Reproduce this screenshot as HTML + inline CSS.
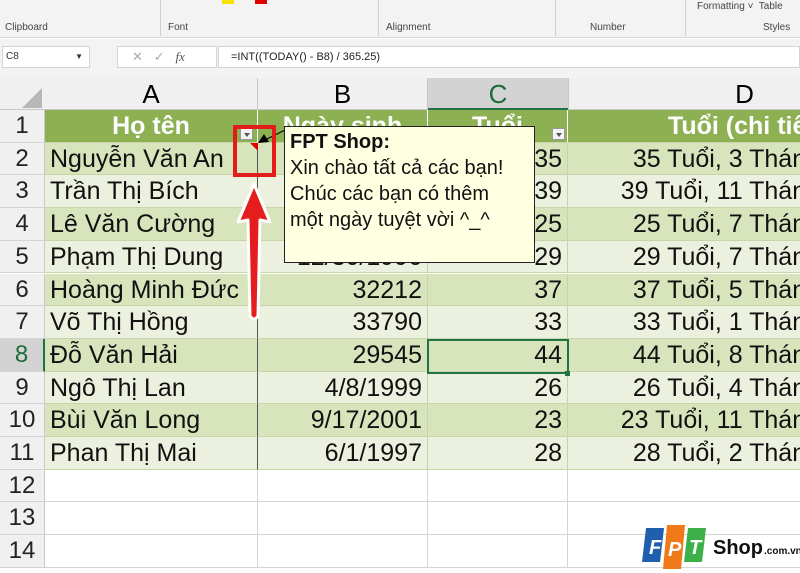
<!DOCTYPE html><html><head><meta charset="utf-8"><style>
body{margin:0;width:800px;height:573px;overflow:hidden;background:#fff;font-family:"Liberation Sans",Arial,sans-serif;position:relative}
.a{position:absolute;box-sizing:border-box}
.c{position:absolute;box-sizing:border-box;font-size:25px;line-height:32px;white-space:nowrap;overflow:hidden;border-right:1px solid #c6d4a8;border-bottom:1px solid #c6d4a8;color:#111}
.r{text-align:right;padding-right:5px}.l{padding-left:5px}
.rh{position:absolute;left:0;width:45px;box-sizing:border-box;font-size:24px;text-align:center;line-height:32px;background:#f0f0f0;border-bottom:1px solid #d4d4d4;border-right:1px solid #c8c8c8;color:#222}
.sm{font-size:10px;color:#444;position:absolute}
.fb{position:absolute;width:13px;height:12px;background:#f4f4f4;border:1px solid #999;box-sizing:border-box}
.fb:after{content:"";position:absolute;left:3px;top:4px;border:3px solid transparent;border-top:4px solid #555}
</style></head><body>
<div class="a" style="left:0;top:0;width:800px;height:38px;background:#f3f3f3;border-bottom:1px solid #d6d6d6"></div>
<div class="sm" style="left:5px;top:22px">Clipboard</div><div class="sm" style="left:168px;top:22px">Font</div><div class="sm" style="left:386px;top:22px">Alignment</div><div class="sm" style="left:590px;top:22px">Number</div><div class="sm" style="left:763px;top:22px">Styles</div>
<div class="sm" style="left:697px;top:1px">Formatting ˅&nbsp; Table</div>
<div class="a" style="left:160px;top:0;width:1px;height:36px;background:#d0d0d0"></div>
<div class="a" style="left:378px;top:0;width:1px;height:36px;background:#d0d0d0"></div>
<div class="a" style="left:555px;top:0;width:1px;height:36px;background:#d0d0d0"></div>
<div class="a" style="left:685px;top:0;width:1px;height:36px;background:#d0d0d0"></div>
<div class="a" style="left:222px;top:0;width:12px;height:4px;background:#f5e400"></div>
<div class="a" style="left:255px;top:0;width:12px;height:4px;background:#e00000"></div>
<div class="a" style="left:0;top:39px;width:800px;height:39px;background:#f3f3f3"></div>
<div class="a" style="left:2px;top:46px;width:88px;height:22px;background:#fff;border:1px solid #d4d4d4;font-size:10px;line-height:20px;padding-left:3px;color:#333">C8<span style="position:absolute;right:6px;font-size:8px">▼</span></div>
<div class="a" style="left:117px;top:46px;width:100px;height:22px;background:#fff;border:1px solid #d4d4d4;font-size:13px;line-height:20px;color:#aaa;padding-left:14px">✕ &nbsp; ✓ &nbsp; <i style="color:#555;font-family:'Liberation Serif'">fx</i></div>
<div class="a" style="left:218px;top:46px;width:582px;height:22px;background:#fff;border:1px solid #d4d4d4;font-size:11px;line-height:20px;padding-left:12px;color:#222">=INT((TODAY() - B8) / 365.25)</div>
<div class="a" style="left:0;top:78px;width:800px;height:32px;background:#f0f0f0;border-bottom:1px solid #c8c8c8"></div>
<div class="a" style="left:22px;top:88px;border:0 solid transparent;border-left:20px solid transparent;border-bottom:20px solid #b8b8b8"></div>
<div class="a" style="left:45px;top:78px;width:213px;height:32px;text-align:center;font-size:26px;line-height:32px;border-right:1px solid #c8c8c8">A</div>
<div class="a" style="left:258px;top:78px;width:170px;height:32px;text-align:center;font-size:26px;line-height:32px;border-right:1px solid #c8c8c8">B</div>
<div class="a" style="left:428px;top:78px;width:140px;height:32px;text-align:center;font-size:26px;line-height:32px;background:#d3d3d3;color:#1e6b3a;border-bottom:2px solid #217346">C</div>
<div class="a" style="left:568px;top:78px;width:352px;height:32px;text-align:center;font-size:26px;line-height:32px;border-left:1px solid #c8c8c8;padding-right:0">D</div>
<div id="g"></div>
<script>
var d=[["Họ tên","Ngày sinh","Tuổi","Tuổi (chi tiết)"],["Nguyễn Văn An","5/20/1988","35","35 Tuổi, 3 Tháng"],["Trần Thị Bích","1/10/1984","39","39 Tuổi, 11 Tháng"],["Lê Văn Cường","7/5/1998","25","25 Tuổi, 7 Tháng"],["Phạm Thị Dung","12/30/1996","29","29 Tuổi, 7 Tháng"],["Hoàng Minh Đức","32212","37","37 Tuổi, 5 Tháng"],["Võ Thị Hồng","33790","33","33 Tuổi, 1 Tháng"],["Đỗ Văn Hải","29545","44","44 Tuổi, 8 Tháng"],["Ngô Thị Lan","4/8/1999","26","26 Tuổi, 4 Tháng"],["Bùi Văn Long","9/17/2001","23","23 Tuổi, 11 Tháng"],["Phan Thị Mai","6/1/1997","28","28 Tuổi, 2 Tháng"]];
var X=[45,258,428,568,826],h='';
for(var i=0;i<14;i++){var t=110+i*32.7;
h+='<div class="rh" style="top:'+t+'px;height:32.7px;'+(i==7?'background:#d3d3d3;color:#1e6b3a;border-right:2px solid #217346':'')+'">'+(i+1)+'</div>';
for(var j=0;j<4;j++){var bg,st='',x=X[j],w=X[j+1]-X[j];
if(i==0){bg='#8db052';st='color:#fff;font-weight:bold;text-align:center;border-right:1px solid #fff;';if(j==3)w=356;}
else if(i<11){bg=i%2?'#d8e4bc':'#ebf1de';}else{bg='#fff';st='border-right:1px solid #d4d4d4;border-bottom:1px solid #d4d4d4;'}
var txt=i<11?d[i][j]:'';var cls=(i==0)?'':(j==0?'l':'r');
if(j==0&&i>0&&i<11)st+='border-right:1px solid #555;';
h+='<div class="c '+cls+'" style="left:'+x+'px;top:'+t+'px;width:'+w+'px;height:32.7px;background:'+bg+';'+st+'">'+txt+'</div>';}}
document.getElementById('g').innerHTML=h;
</script>
<div class="a" style="left:427px;top:339px;width:142px;height:35px;border:2px solid #217346"></div>
<div class="a" style="left:565px;top:371px;width:5px;height:5px;background:#217346"></div>
<div class="fb" style="left:240px;top:128px"></div>
<div class="fb" style="left:552px;top:128px"></div>
<div class="a" style="left:250px;top:143px;border-top:8px solid #e00000;border-left:8px solid transparent"></div>
<svg class="a" style="left:255px;top:125px" width="40" height="25"><line x1="8" y1="16" x2="32" y2="4" stroke="#000"/><polygon points="3,18 14,17 9,9" fill="#000"/></svg>
<div class="a" style="left:284px;top:126px;width:251px;height:137px;background:#ffffe1;border:1px solid #222;font-size:20px;line-height:26px;padding:2px 0 0 5px;color:#111">
<b>FPT Shop:</b><br>Xin chào tất cả các bạn!<br>Chúc các bạn có thêm<br>một ngày tuyệt vời ^_^</div>
<div class="a" style="left:233px;top:125px;width:43px;height:52px;border:4px solid #e21b1b"></div>
<svg class="a" style="left:232px;top:180px" width="44" height="145"><path d="M22 4 L38 42 L28 40 L26 136 Q22 142 18 136 L16 40 L6 42 Z" fill="#e51d1d" stroke="#fff" stroke-width="3" stroke-linejoin="round"/></svg>
<svg class="a" style="left:640px;top:524px" width="160" height="46">
<path d="M6 4 H24 L20 38 H2 Z" fill="#1f5fae"/><path d="M27 1 H45 L41 45 H23 Z" fill="#f07a1a"/><path d="M48 4 H66 L62 38 H44 Z" fill="#3db04a"/>
<text x="9" y="30" fill="#fff" font-family="Liberation Sans" font-weight="bold" font-style="italic" font-size="20">F</text>
<text x="28" y="32" fill="#fff" font-family="Liberation Sans" font-weight="bold" font-style="italic" font-size="20">P</text>
<text x="49" y="30" fill="#fff" font-family="Liberation Sans" font-weight="bold" font-style="italic" font-size="20">T</text>
<text x="73" y="30" fill="#111" font-family="Liberation Sans" font-weight="bold" font-size="20">Shop</text>
<text x="124" y="30" fill="#111" font-family="Liberation Sans" font-weight="bold" font-size="10">.com.vn</text></svg>
</body></html>
